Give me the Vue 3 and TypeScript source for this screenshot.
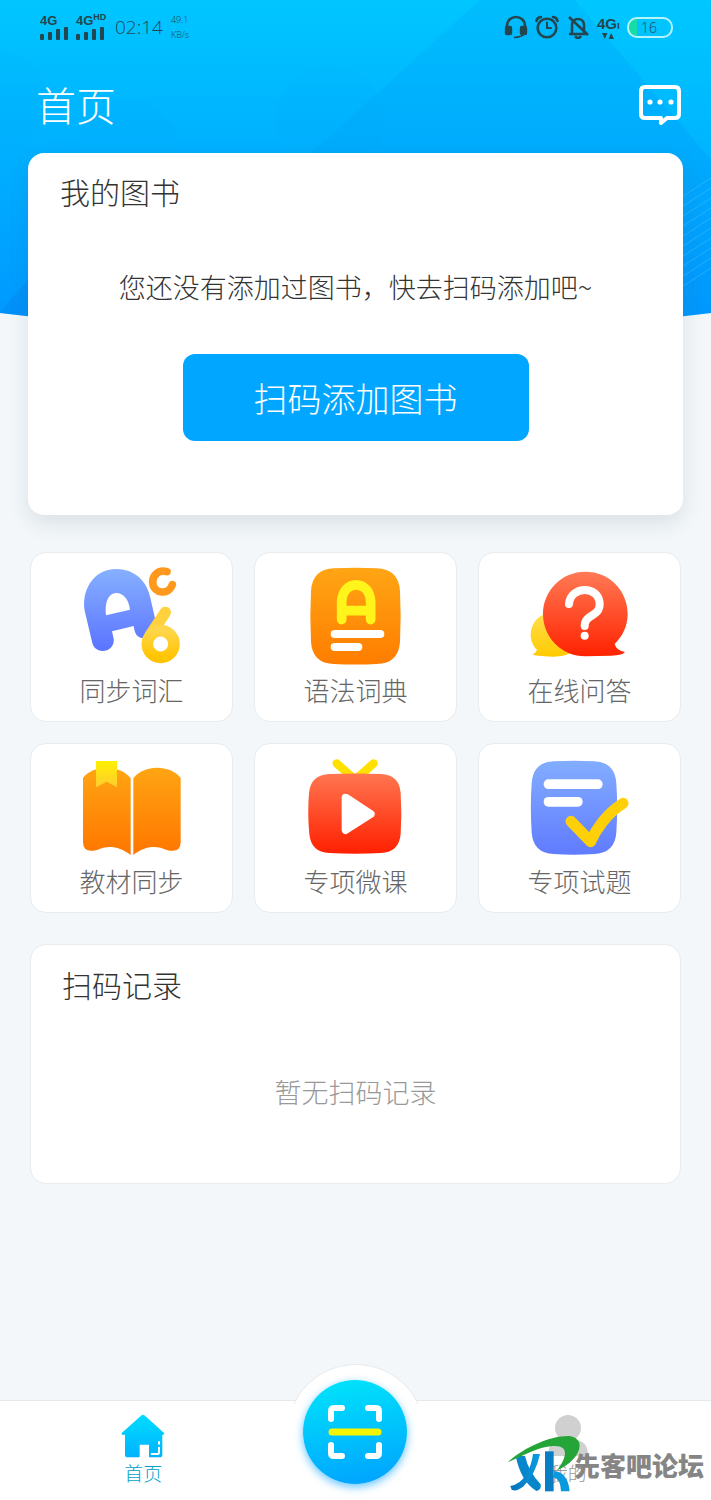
<script setup lang="ts">
interface Feature {
  id: string
  label: string
  viewBox: string
}

const features: Feature[] = [
  { id: 'vocabulary', label: '同步词汇', viewBox: '48 27 336 312' },
  { id: 'grammar', label: '语法词典', viewBox: '30 27 336 312' },
  { id: 'question', label: '在线问答', viewBox: '43 27 336 312' },
  { id: 'textbook', label: '教材同步', viewBox: '48 30 336 312' },
  { id: 'lesson', label: '专项微课', viewBox: '30 30 336 312' },
  { id: 'exam', label: '专项试题', viewBox: '43 30 336 312' },
]
</script>

<template>
  <div class="page">
    <svg class="backdrop" viewBox="0 0 711 336" preserveAspectRatio="none" aria-hidden="true">
      <defs>
        <linearGradient id="sky" x1="0" y1="0" x2="0" y2="1">
          <stop offset="0" stop-color="#00c6ff" />
          <stop offset="0.45" stop-color="#00b0ff" />
          <stop offset="1" stop-color="#0096ff" />
        </linearGradient>
        <clipPath id="skyShape"><path d="M0 0H711V313Q355 358 0 313Z" /></clipPath>
      </defs>
      <g clip-path="url(#skyShape)">
        <path d="M0 0H711V336H0Z" fill="url(#sky)" />
        <path d="M480 0H575L711 160V336H110Z" fill="#008cf0" opacity="0.14" />
        <path d="M575 0L711 160V0Z" fill="#00d0ff" opacity="0.15" />
        <circle cx="0" cy="100" r="47" fill="#0098f0" opacity="0.04" />
        <circle cx="128" cy="150" r="50" fill="#0098f0" opacity="0.04" />
        <circle cx="330" cy="120" r="54" fill="#0098f0" opacity="0.04" />
        <path d="M0 312L28 280V330H0Z" fill="#0078e8" opacity="0.25" />
        <path
          d="M680 198L711 178M680 208L711 188M680 218L711 198M680 228L711 208M680 238L711 218M680 248L711 228M680 258L711 238M680 268L711 248M680 278L711 258M680 288L711 268"
          stroke="#5cc8ff" stroke-width="1" opacity="0.4"
        />
      </g>
    </svg>

    <div class="status">
      <div class="signal">
        <span class="net">4G</span>
        <svg width="28" height="13" viewBox="0 0 28 13" fill="#24464f"><rect y="7" width="4" height="6" rx="1" /><rect x="8" y="5" width="4" height="8" rx="1" /><rect x="16" y="2" width="4" height="11" rx="1" /><rect x="24" width="4" height="13" rx="1" /></svg>
      </div>
      <div class="signal">
        <span class="net">4G<sup>HD</sup></span>
        <svg width="28" height="13" viewBox="0 0 28 13" fill="#24464f"><rect y="7" width="4" height="6" rx="1" /><rect x="8" y="5" width="4" height="8" rx="1" /><rect x="16" y="2" width="4" height="11" rx="1" /><rect x="24" width="4" height="13" rx="1" /></svg>
      </div>
      <span class="time">02:14</span>
      <span class="rate">49.1<br />KB/s</span>
      <div class="indicators">
        <svg width="24" height="24" viewBox="0 0 24 24" fill="none" stroke="#24464f" stroke-width="2.4">
          <path d="M3 14V11C3 -1 21 -1 21 11V14" /><rect x="2" y="12" width="5" height="7" rx="1" fill="#24464f" /><rect x="17" y="12" width="5" height="7" rx="1" fill="#24464f" /><path d="M20 19Q18 22 10 22.5" stroke-width="1.5" />
        </svg>
        <svg width="24" height="24" viewBox="0 0 24 24" fill="none" stroke="#24464f" stroke-width="2.6" stroke-linecap="round">
          <circle cx="12" cy="13" r="9.3" /><path d="M12 7.5V13H16" stroke-width="2" /><path d="M1.5 6Q2 2.5 6 2M22.5 6Q22 2.5 18 2" />
        </svg>
        <svg width="24" height="24" viewBox="0 0 24 24" fill="none" stroke="#24464f" stroke-width="2.6">
          <path d="M3 19H21M6 19V10C6 2 18 2 18 10V19M9 21Q12 25 15 21M3 2L22 20" />
        </svg>
        <div class="data">
          <span class="net">4G<small>ı</small></span>
          <svg width="12" height="6" viewBox="0 0 12 6" fill="#24464f"><path d="M0 0H5.500L2.800 6ZM6.500 6H12L9.200 0Z" /></svg>
        </div>
        <div class="battery"><span>16</span></div>
      </div>
    </div>

    <header class="topbar">
      <h1>首页</h1>
      <button class="message" type="button" aria-label="消息">
        <svg width="44" height="42" viewBox="0 0 44 42">
          <path d="M7 4H37Q41 4 41 8V31Q41 35 37 35H29L23 40V35H7Q3 35 3 31V8Q3 4 7 4Z" fill="none" stroke="#fff" stroke-width="4" stroke-linejoin="round" />
          <g fill="#fff"><circle cx="12" cy="19" r="2.6" /><circle cx="22" cy="19" r="2.6" /><circle cx="33" cy="19" r="2.6" /></g>
        </svg>
      </button>
    </header>

    <main>
      <section class="books">
        <h2>我的图书</h2>
        <p>您还没有添加过图书，快去扫码添加吧~</p>
        <button type="button" class="add">扫码添加图书</button>
      </section>

      <section class="features">
        <button v-for="item in features" :key="item.id" type="button" class="feature">
          <svg width="112" height="104" :viewBox="item.viewBox" aria-hidden="true">
            <g v-if="item.id === 'vocabulary'">
              <defs>
                <linearGradient id="blueA" x1="0" y1="0" x2="0" y2="1"><stop offset="0" stop-color="#86b0ff" /><stop offset="1" stop-color="#5b73ff" /></linearGradient>
                <linearGradient id="six" x1="0" y1="0" x2="0" y2="1"><stop offset="0" stop-color="#ffd64a" /><stop offset="1" stop-color="#ffc400" /></linearGradient>
              </defs>
              <path fill="url(#blueA)" fill-rule="evenodd" d="M97 264L75 172C62 106 101 45 163 42C222 40 260 76 271 128L286 194L248 250C231 247 224 236 221 213L156 229L161 251C166 292 107 302 97 264ZM138 181L210 164C207 134 190 113 167 114C142 117 134 147 138 181Z" />
              <path d="M321 50C295 43 278 61 278 82C281 119 327 120 337 89" fill="none" stroke="#ff991d" stroke-width="23" stroke-linecap="round" />
              <path d="M316 172L271 240" stroke="#ffd23d" stroke-width="34" stroke-linecap="round" />
              <circle cx="302" cy="267" r="40" fill="none" stroke="url(#six)" stroke-width="35" />
            </g>
            <g v-else-if="item.id === 'grammar'">
              <defs><linearGradient id="orangeTile" x1="0" y1="0" x2="0" y2="1"><stop offset="0" stop-color="#ffa514" /><stop offset="1" stop-color="#ff7d00" /></linearGradient></defs>
              <path fill="url(#orangeTile)" d="M132 40Q196 37 260 40Q326 42 330 108Q334 183 330 260Q326 325 260 327Q196 330 132 327Q67 325 63 260Q59 183 63 108Q67 42 132 40Z" />
              <path d="M155 194V143C155 72 242 72 242 143V194M155 167H242" fill="none" stroke="#fff51a" stroke-width="29" stroke-linecap="round" />
              <rect x="122" y="225" width="161" height="24" rx="12" fill="#fff" /><rect x="122" y="264" width="95" height="24" rx="12" fill="#fff" />
            </g>
            <g v-else-if="item.id === 'question'">
              <defs>
                <linearGradient id="redBubble" x1="0" y1="0" x2="0" y2="1"><stop offset="0" stop-color="#ff7a55" /><stop offset="1" stop-color="#ff2200" /></linearGradient>
                <linearGradient id="yellowBubble" x1="0" y1="0" x2="0" y2="1"><stop offset="0" stop-color="#ffdf4d" /><stop offset="1" stop-color="#ffca00" /></linearGradient>
              </defs>
              <path fill="url(#yellowBubble)" d="M108 176C62 190 48 252 82 284Q79 294 68 298Q75 304 130 305C158 304 170 300 185 294Z" />
              <path fill="url(#redBubble)" d="M227 50C300 50 354 107 354 177C354 214 338 244 315 267Q320 287 346 291Q340 301 304 302L227 304C156 304 100 247 100 177C100 107 156 50 227 50Z" />
              <path d="M178 147C183 90 270 92 270 147C270 187 225 176 225 213" fill="none" stroke="#fff" stroke-width="24" stroke-linecap="round" /><circle cx="225" cy="242" r="12" fill="#fff" />
            </g>
            <g v-else-if="item.id === 'textbook'">
              <defs>
                <linearGradient id="bookPage" x1="0" y1="0" x2="0" y2="1"><stop offset="0" stop-color="#ffa513" /><stop offset="1" stop-color="#ff7600" /></linearGradient>
                <linearGradient id="ribbon" x1="0" y1="0" x2="0" y2="1"><stop offset="0" stop-color="#fff000" /><stop offset="1" stop-color="#ffcc30" /></linearGradient>
              </defs>
              <path fill="url(#bookPage)" d="M69 99C100 58 180 58 212 100V330C177 304 145 300 111 315Q69 326 69 290Z" /><path fill="url(#bookPage)" d="M220 100C251 58 331 58 362 99V290Q362 326 320 315C287 300 254 304 220 330Z" />
              <path fill="url(#ribbon)" d="M108 48H171V127L140 110L108 127Z" />
            </g>
            <g v-else-if="item.id === 'lesson'">
              <defs><linearGradient id="redTile" x1="0" y1="0" x2="0" y2="1"><stop offset="0" stop-color="#ff7650" /><stop offset="1" stop-color="#ff2000" /></linearGradient></defs>
              <path d="M140 55L184 94M251 55L207 94" stroke="#ffe000" stroke-width="25" stroke-linecap="round" />
              <path fill="url(#redTile)" d="M118 87Q195 84 273 87Q327 89 332 143Q336 206 332 267Q327 322 273 324Q195 328 118 324Q63 322 58 267Q52 206 57 143Q63 89 118 87Z" />
              <path d="M167 158L242 207L167 255Z" fill="#fff" stroke="#fff" stroke-width="24" stroke-linejoin="round" />
            </g>
            <g v-else>
              <defs><linearGradient id="blueTile" x1="0" y1="0" x2="0" y2="1"><stop offset="0" stop-color="#83adff" /><stop offset="1" stop-color="#607bff" /></linearGradient></defs>
              <path fill="url(#blueTile)" d="M132 49Q193 46 253 49Q316 51 320 115Q325 188 320 262Q316 325 253 327Q193 331 132 327Q70 325 66 262Q61 188 66 115Q70 51 132 49Z" />
              <rect x="102" y="103" width="177" height="29" rx="14" fill="#fff" /><rect x="102" y="156" width="117" height="29" rx="14" fill="#fff" />
              <path d="M184 229L243 290C258 255 290 206 340 175" fill="none" stroke="#ffd008" stroke-width="33" stroke-linecap="round" stroke-linejoin="round" />
            </g>
          </svg>
          <span>{{ item.label }}</span>
        </button>
      </section>

      <section class="records">
        <h2>扫码记录</h2>
        <p>暂无扫码记录</p>
      </section>
    </main>

    <nav class="tabs">
      <a href="#home" class="tab active">
        <svg width="44" height="44" viewBox="0 0 132 132">
          <defs><linearGradient id="home" x1="0" y1="0" x2="0" y2="1"><stop offset="0" stop-color="#00dcff" /><stop offset="1" stop-color="#00b2ff" /></linearGradient></defs>
          <path fill="url(#home)" d="M60 5Q66 0 72 5L130 58Q128 64 124 62V122Q124 130 116 130H84V92H56V130H20Q12 130 12 122V62H3Q0 60 3 56Z" />
          <path d="M114 84V89M114 101V116Q114 120 110 120H92" fill="none" stroke="#fff" stroke-width="6" stroke-linecap="round" />
        </svg>
        <span>首页</span>
      </a>
      <button type="button" class="scan" aria-label="扫码">
        <svg width="54" height="54" viewBox="0 0 54 54" fill="none" stroke-linecap="round" stroke-linejoin="round" stroke-width="6">
          <path stroke="#fff" d="M14 3H6Q3 3 3 6V14M40 3H48Q51 3 51 6V14M3 40V48Q3 51 6 51H14M51 40V48Q51 51 48 51H40" />
          <path stroke="#f5f500" stroke-width="7" d="M4 27H50" />
        </svg>
      </button>
      <a href="#mine" class="tab">
        <svg width="44" height="44" viewBox="0 0 44 44" fill="#d0d0d0"><circle cx="22" cy="14" r="13" /><path d="M2 42Q2 27 14 26Q22 32 30 26Q42 27 42 42Z" /></svg>
        <span>我的</span>
      </a>
    </nav>

    <div class="watermark">
      <svg width="76" height="60" viewBox="0 0 228 180" aria-hidden="true">
        <defs><linearGradient id="mark" x1="0" y1="0" x2="1" y2="0"><stop offset="0" stop-color="#0870b8" /><stop offset="1" stop-color="#069ee4" /></linearGradient></defs>
        <path d="M26 63H54Q65 110 101 148Q104 165 88 168Q42 140 26 63Z" fill="#0786cc" />
        <path d="M78 57H99Q87 115 50 154Q28 172 14 164L10 153Q40 148 58 118Q74 90 78 57Z" fill="url(#mark)" />
        <path d="M114 49H140V169H114Z" fill="#087fc5" /><path d="M140 108Q182 110 188 169H162Q160 130 140 128Z" fill="#0999dd" />
        <path d="M2 82C53 35 134 1 187 3C245 12 215 80 150 106C179 68 189 29 137 33C91 36 45 64 2 82Z" fill="#25a437" />
      </svg>
      <span>先客吧论坛</span>
    </div>
  </div>
</template>

<style>
body {
  margin: 0;
  background: #f3f7fa;
}
</style>

<style scoped>
.page {
  position: relative;
  display: flex;
  flex-direction: column;
  box-sizing: border-box;
  min-height: 100vh;
  overflow: hidden;
  background: #f3f7fa;
  color: #333;
  font-family: "Noto Sans CJK SC", sans-serif;
  font-weight: 300;
}
h1, h2, p {
  margin: 0;
  font-weight: 300;
}
button {
  padding: 0;
  border: 0;
  background: none;
  color: inherit;
  font: inherit;
  cursor: pointer;
}
svg {
  display: block;
  flex: none;
}
.backdrop {
  position: absolute;
  top: 0;
  left: 0;
  width: 100%;
  height: 336px;
}
.status {
  position: relative;
  display: flex;
  align-items: center;
  height: 54px;
  padding: 0 38px 0 40px;
  color: #24464f;
}
.signal {
  width: 36px;
}
.net {
  display: block;
  font: 700 13px/12px "Liberation Sans", sans-serif;
  white-space: nowrap;
}
.net sup {
  font-size: 9px;
  line-height: 0;
}
.net small {
  font-size: 10px;
}
.time {
  margin-left: 3px;
  font: 300 19px/24px "Open Sans", sans-serif;
}
.rate {
  margin-left: 8px;
  font: 300 9px/15px "Open Sans", sans-serif;
}
.indicators {
  display: flex;
  align-items: center;
  gap: 7px;
  margin-left: auto;
}
.data {
  width: 23px;
}
.data .net {
  font-size: 15px;
  line-height: 15px;
}
.data svg {
  margin-left: 5px;
}
.battery {
  box-sizing: border-box;
  width: 46px;
  height: 21px;
  border: 2px solid #b5f3ff;
  border-radius: 10px;
  background: linear-gradient(90deg, #16dda5 8px, transparent 8px);
  font: 300 14px/17px "Open Sans", sans-serif;
  padding-left: 12px;
}
.topbar {
  position: relative;
  display: flex;
  align-items: center;
  justify-content: space-between;
  height: 99px;
  padding: 0 29px 0 36px;
  color: #fff;
}
.topbar h1 {
  font-size: 40px;
  line-height: 60px;
}
main {
  position: relative;
}
.books {
  display: flex;
  flex-direction: column;
  align-items: center;
  box-sizing: border-box;
  margin: 0 28px;
  padding: 16px 32px 74px;
  border-radius: 16px;
  background: #fff;
  box-shadow: 0 8px 20px rgba(70, 90, 100, 0.14);
}
h2 {
  align-self: flex-start;
  font-size: 30px;
  line-height: 44px;
}
.books p {
  margin: 54px 0 47px;
  font-size: 27px;
  line-height: 40px;
  white-space: nowrap;
}
.add {
  width: 346px;
  max-width: 100%;
  height: 87px;
  border-radius: 12px;
  background: #00a6ff;
  color: #fff;
  font-size: 34px;
}
.features {
  display: grid;
  grid-template-columns: repeat(3, 1fr);
  gap: 21px;
  margin: 37px 30px 31px;
}
.feature {
  display: flex;
  flex-direction: column;
  align-items: center;
  box-sizing: border-box;
  height: 170px;
  padding-top: 11px;
  border: 1px solid #e9ecee;
  border-radius: 16px;
  background: #fff;
  color: #666;
  font-size: 26px;
  line-height: 44px;
}
.records {
  display: flex;
  flex-direction: column;
  box-sizing: border-box;
  min-height: 240px;
  margin: 0 30px;
  padding: 17px 31px;
  border: 1px solid #e9ecee;
  border-radius: 16px;
  background: #fff;
}
.records p {
  margin-top: 66px;
  color: #999;
  font-size: 27px;
  line-height: 40px;
  text-align: center;
}
.tabs {
  position: relative;
  display: grid;
  grid-template-columns: repeat(3, 1fr);
  justify-items: center;
  box-sizing: border-box;
  height: 100px;
  margin-top: auto;
  padding: 0 37px;
  border-top: 1px solid #e6e9eb;
  background: #fff;
}
.tab {
  display: flex;
  flex-direction: column;
  align-items: center;
  padding-top: 13px;
  color: #999;
  font-size: 19px;
  line-height: 30px;
  text-decoration: none;
}
.tab.active {
  color: #00a2cc;
}
.scan {
  position: relative;
  z-index: 0;
  display: grid;
  place-items: center;
  width: 104px;
  height: 104px;
  margin-top: -21px;
  border-radius: 50%;
  background: linear-gradient(170deg, #00e6fa, #00a0ff);
  box-shadow: 0 3px 9px rgba(0, 160, 255, 0.6);
}
.tabs::before {
  content: "";
  position: absolute;
  top: -37px;
  left: calc(50% - 69px);
  box-sizing: border-box;
  width: 138px;
  height: 138px;
  border: 1px solid #e6e9eb;
  border-radius: 50%;
  background: #fff;
  clip-path: inset(0 0 98px 0);
}
.watermark {
  position: absolute;
  right: 7px;
  bottom: 5px;
  display: flex;
  align-items: center;
  color: #858585;
  font-size: 26px;
  font-weight: 900;
  line-height: 30px;
  pointer-events: none;
}
.watermark span {
  margin-left: -9px;
}
</style>
